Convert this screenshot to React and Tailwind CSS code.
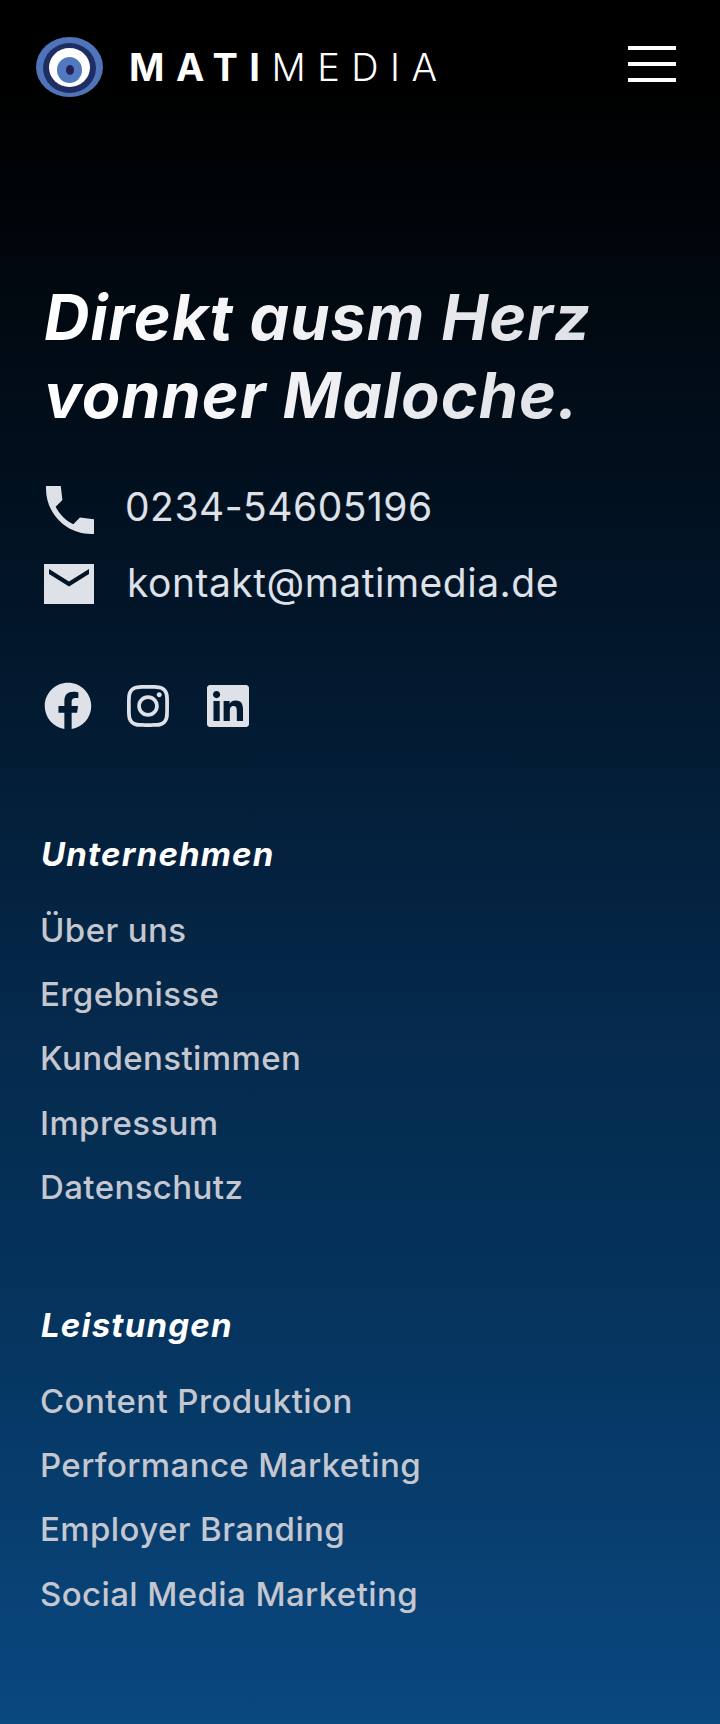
import { FaFacebook, FaInstagram, FaLinkedin } from "react-icons/fa";

const companyLinks = ["Über uns", "Ergebnisse", "Kundenstimmen", "Impressum", "Datenschutz"];
const serviceLinks = ["Content Produktion", "Performance Marketing", "Employer Branding", "Social Media Marketing"];

const Logo = () => (
  <svg width="68" height="60" viewBox="0 0 68 60" className="shrink-0">
    <ellipse cx="33.5" cy="30" rx="33.5" ry="30" fill="#4f74b9" />
    <ellipse cx="33.5" cy="31" rx="26.5" ry="25" fill="#1e2d63" />
    <ellipse cx="33.5" cy="30.5" rx="20.5" ry="19.5" fill="#ffffff" />
    <ellipse cx="33.5" cy="33" rx="12.5" ry="13" fill="#5179bd" />
    <ellipse cx="34" cy="33" rx="4" ry="5" fill="#241f55" />
  </svg>
);

const LinkGroup = ({ title, links }) => (
  <div>
    <h3 className="pl-[1px] text-[33px] leading-[40px] font-bold italic tracking-[1.2px] text-white">{title}</h3>
    <ul className="mt-[24px] flex flex-col text-[#c5c7d0]">
      {links.map((link) => (
        <li key={link} className="h-[64.2px] flex items-center text-[33px] leading-[40px] font-medium tracking-[0.4px]">
          {link}
        </li>
      ))}
    </ul>
  </div>
);

const App = () => {
  return (
    <div className="w-[720px] h-[1724px] overflow-hidden bg-[linear-gradient(180deg,#000000_0%,#000000_5%,#021528_35%,#052a4d_60%,#05335c_75%,#0a4880_100%)] font-['Inter',sans-serif]">
      {/* header */}
      <header className="flex items-center justify-between pl-[36px] pr-[44px] pt-[37px]">
        <div className="flex items-center gap-[25px]">
          <Logo />
          <div className="text-[38px] leading-[60px] tracking-[11.5px] text-white">
            <span className="font-bold">MATI</span>
            <span className="font-light">MEDIA</span>
          </div>
        </div>
        <div className="flex flex-col gap-[12px] mb-[6px]">
          <div className="w-[48px] h-[4px] bg-white" />
          <div className="w-[48px] h-[4px] bg-white" />
          <div className="w-[48px] h-[4px] bg-white" />
        </div>
      </header>

      {/* hero */}
      <section className="pl-[44px] pt-[181px]">
        <h1 className="text-[63px] leading-[78px] font-bold italic tracking-[1px] bg-gradient-to-r from-white to-[#dcdde3] bg-clip-text text-transparent w-[620px]">
          Direkt ausm Herz vonner Maloche.
        </h1>

        <div className="mt-[38px] flex items-center gap-[27px] text-[#dfe1e8] text-[39px] leading-[64px] tracking-[0.5px]">
          <svg width="64" height="64" viewBox="0 0 24 24" fill="currentColor" className="-ml-[6px] -mr-[4px] mt-[6px]">
            <path d="M21 15.46l-5.27-.61-2.52 2.52c-2.83-1.44-5.15-3.75-6.59-6.59l2.53-2.53L8.54 3H3.03C2.45 13.18 10.82 21.55 21 20.97v-5.51z" />
          </svg>
          <span>0234-54605196</span>
        </div>
        <div className="mt-[9px] flex items-center gap-[29px] text-[#dfe1e8] text-[39px] leading-[64px] tracking-[0.5px]">
          <svg width="60" height="60" viewBox="0 0 24 24" fill="currentColor" className="-ml-[5px] -mr-[1px] mt-[2px]">
            <path d="M22 4H2.01L2 20h20V4zm-2 4l-8 5-8-5V6l8 5 8-5v2z" />
          </svg>
          <span>kontakt@matimedia.de</span>
        </div>

        <div className="mt-[67px] flex items-center text-[#dfe1e8]">
          <FaFacebook className="w-[48px] h-[48px]" />
          <FaInstagram className="ml-[32px] w-[48px] h-[48px]" />
          <FaLinkedin className="ml-[32px] w-[48px] h-[48px]" />
        </div>
      </section>

      {/* footer links */}
      <nav className="pl-[40px] pt-[104px] flex flex-col gap-[86px]">
        <LinkGroup title="Unternehmen" links={companyLinks} />
        <LinkGroup title="Leistungen" links={serviceLinks} />
      </nav>
    </div>
  );
};

export default App;
